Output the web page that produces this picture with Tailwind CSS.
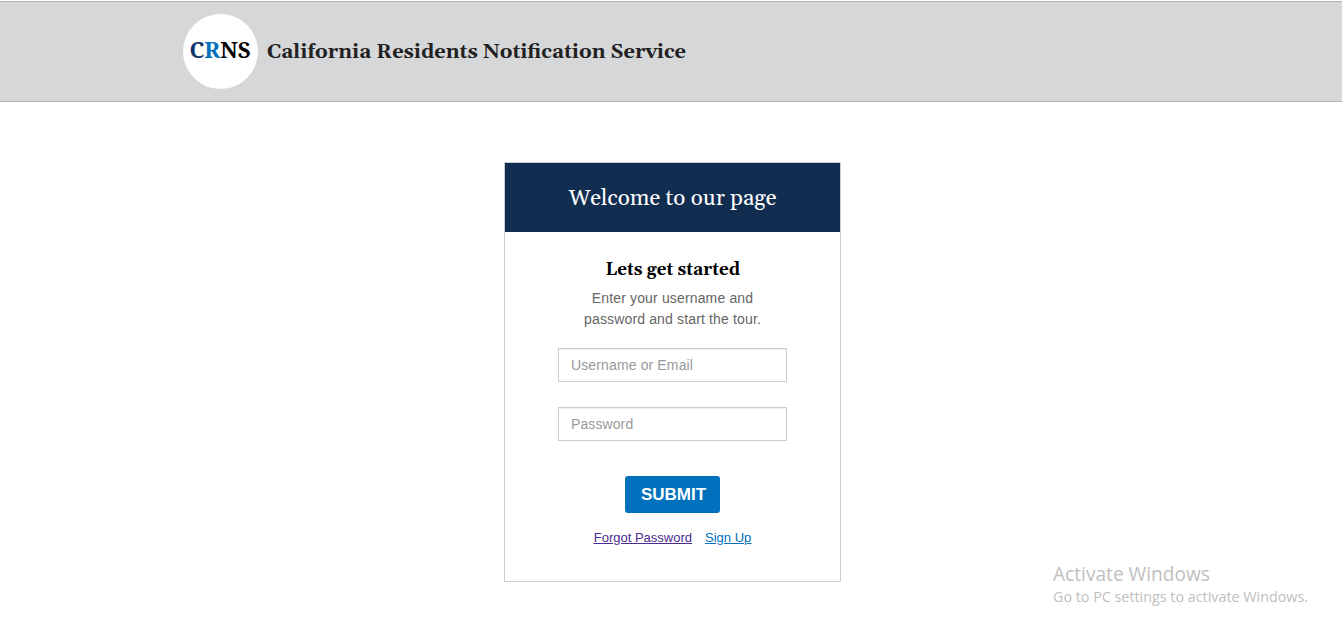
<!DOCTYPE html>
<html lang="en">
<head>
<meta charset="utf-8">
<title>California Residents Notification Service</title>
<script src="https://cdn.jsdelivr.net/npm/@tailwindcss/browser@4"></script>
</head>
<body class="relative h-[640px] overflow-hidden bg-white font-['Liberation_Sans',Arial,sans-serif]">
<header class="mt-px flex h-[101px] items-start gap-[9px] border-y border-[#b0b0b0] bg-[#d6d7d9] pl-[183px] pt-[12px]">
  <div class="h-[75px] w-[75px] shrink-0 rounded-full bg-white">
    <svg class="block h-[75px] w-[75px] font-['Noto_Serif','DejaVu_Serif_Condensed','DejaVu_Serif',serif] text-[22px] font-bold" viewBox="0 0 75 75"><text x="6.5" y="44" textLength="61" lengthAdjust="spacingAndGlyphs"><tspan fill="#0b3468">C</tspan><tspan fill="#0071bc">R</tspan><tspan fill="#000">NS</tspan></text></svg>
  </div>
  <h1><svg class="block h-[75px] w-[440px] overflow-visible font-['Gelasio','Liberation_Serif',serif] text-[20px] font-bold" viewBox="0 0 440 75"><text x="0" y="44" fill="#212121" textLength="419" lengthAdjust="spacingAndGlyphs">California Residents Notification Service</text></svg></h1>
</header>
<main class="ml-[504px] mt-[60px] flex h-[420px] w-[337px] flex-col items-center border border-[#cccccc]">
  <h2 class="w-full shrink-0 bg-[#112e51]"><svg class="block h-[69px] w-[335px] font-['Gelasio','Liberation_Serif',serif] text-[22.5px]" viewBox="0 0 335 69"><text x="63.5" y="42" fill="#fff" textLength="208" lengthAdjust="spacingAndGlyphs">Welcome to our page</text></svg></h2>
  <h3 class="mt-[24px]"><svg class="block h-[26px] w-[335px] font-['Gelasio','Liberation_Serif',serif] text-[17px] font-bold" viewBox="0 0 335 26"><text x="100.5" y="19" textLength="134.5" lengthAdjust="spacingAndGlyphs">Lets get started</text></svg></h3>
  <p class="mt-[6px] text-center text-[14px] leading-[21px] tracking-[0.15px] text-[#666666]">Enter your username and<br>password and start the tour.</p>
  <input type="text" placeholder="Username or Email" class="mt-[18px] h-[34px] w-[229px] shrink-0 border border-[#cccccc] px-3 text-[14px] tracking-[0.13px] shadow-[inset_0_1px_1px_rgba(0,0,0,0.075)] placeholder:text-[#999999]">
  <input type="password" placeholder="Password" class="mt-[25px] h-[34px] w-[229px] shrink-0 border border-[#cccccc] px-3 text-[14px] tracking-[0.1px] shadow-[inset_0_1px_1px_rgba(0,0,0,0.075)] placeholder:text-[#999999]">
  <button class="mt-[35px] h-[37px] w-[95px] shrink-0 rounded-[3px] bg-[#0071bc] pl-[2px] text-[17px] font-bold text-white">SUBMIT</button>
  <nav class="mt-[15px] flex gap-[13px] text-[13px] leading-[20px] underline"><a class="text-[#4c2c92]">Forgot Password</a><a class="text-[#0071bc]">Sign Up</a></nav>
</main>
<aside class="absolute left-[1053px] top-[556px] whitespace-nowrap font-['Open_Sans',sans-serif]">
  <svg class="block h-[60px] w-[270px] overflow-visible" viewBox="0 0 270 60"><text x="0" y="25" fill="#c0c0c0" class="text-[19.5px]" textLength="157" lengthAdjust="spacingAndGlyphs">Activate Windows</text><text x="0" y="46" fill="#c0c0c0" class="text-[14px]" textLength="255" lengthAdjust="spacingAndGlyphs">Go to PC settings to activate Windows.</text></svg>
</aside>
</body>
</html>
